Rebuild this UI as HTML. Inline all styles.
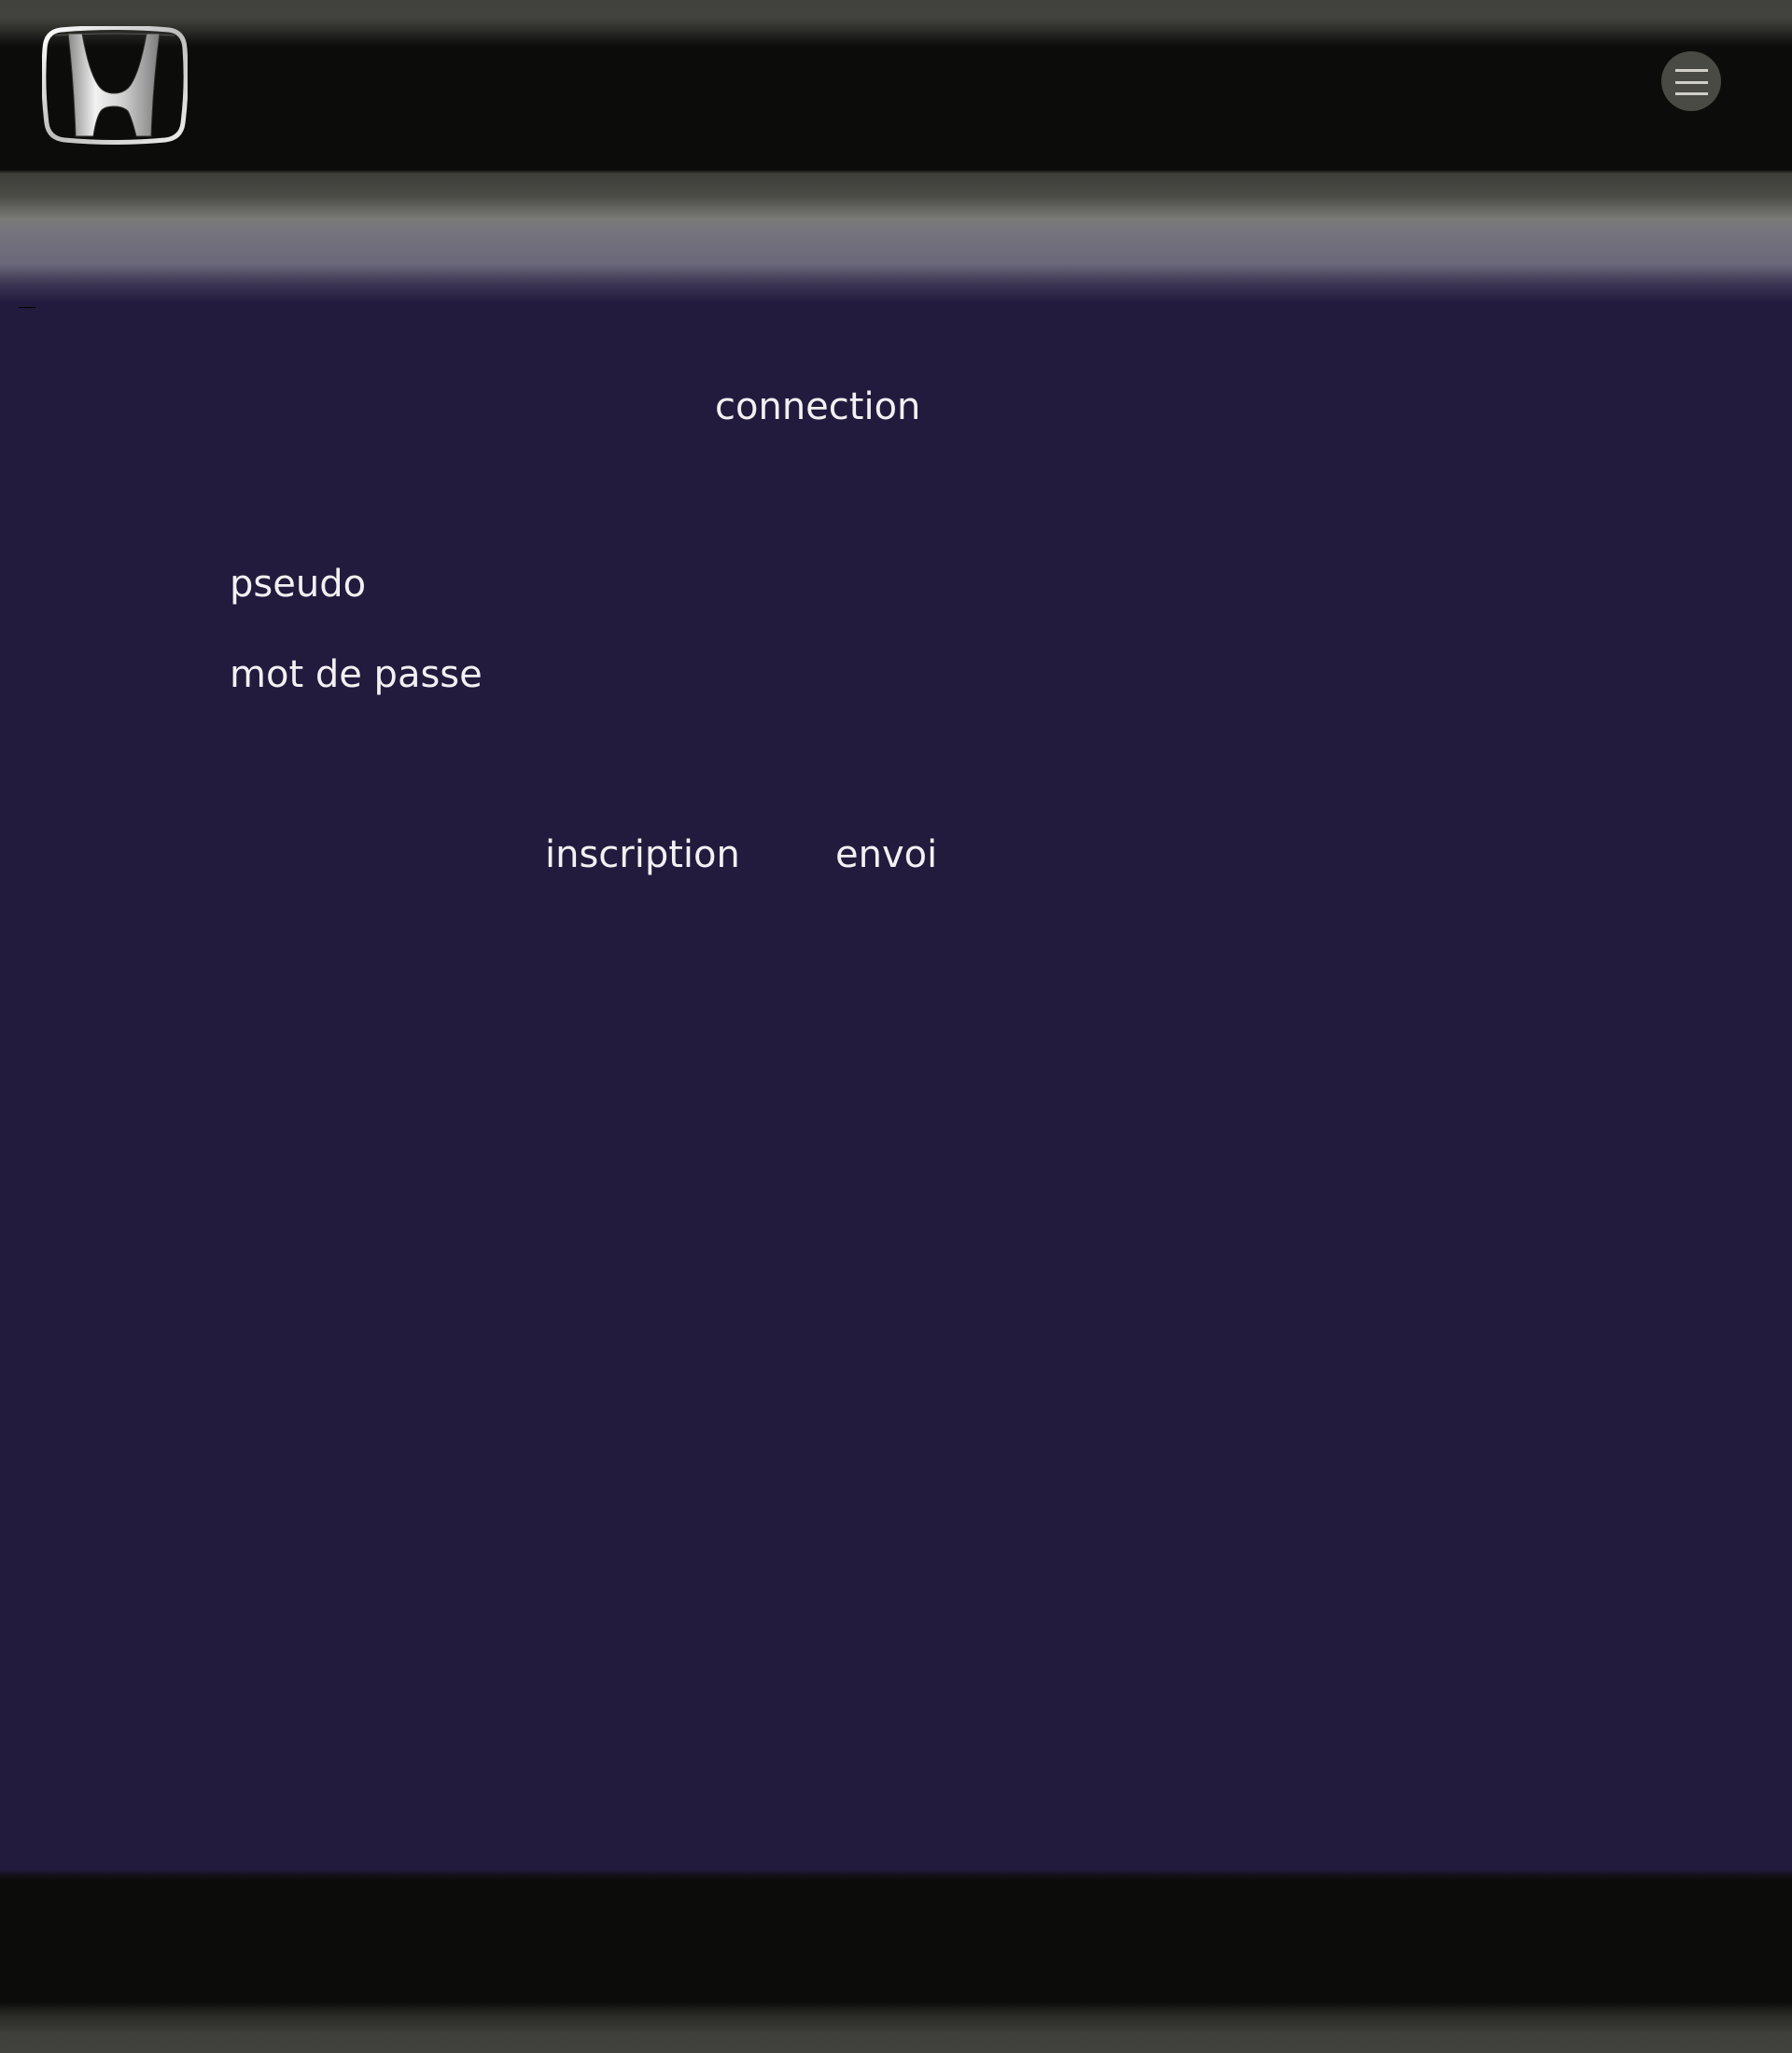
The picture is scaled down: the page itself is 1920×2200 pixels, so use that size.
<!DOCTYPE html>
<html><head><meta charset="utf-8"><style>
html,body{margin:0;padding:0}
body{width:1920px;height:2200px;position:relative;overflow:hidden;
background:linear-gradient(to bottom,#41423d 0px,#42433e 20px,#1a1a18 42px,#0c0c0a 50px,#0c0c0a 182px,#3e3f3a 186px,#4a4b45 210px,#7a7a77 235px,#76747d 248px,#6b697a 282px,#3b3452 305px,#231b3e 325px,#231b3e 2003px,#121018 2010px,#0c0c0a 2015px,#0c0c0a 2145px,#2a2b27 2160px,#3f403b 2180px,#41423d 2200px);
font-family:"DejaVu Sans","Liberation Sans",sans-serif;color:#f4f0f2}
.t{position:absolute;font-size:40px;line-height:1;white-space:nowrap}
</style></head><body>
<svg style="position:absolute;left:45px;top:28px" width="156" height="128" viewBox="0 0 156 128">
<defs>
<linearGradient id="g" x1="0" y1="0" x2="1" y2="1"><stop offset="0" stop-color="#fff"/><stop offset=".5" stop-color="#bdbdbd"/><stop offset="1" stop-color="#eee"/></linearGradient>
<linearGradient id="h" x1="0" y1="0" x2="1" y2="0"><stop offset="0" stop-color="#8a8a8a"/><stop offset=".3" stop-color="#f2f2f2"/><stop offset=".6" stop-color="#cfcfcf"/><stop offset="1" stop-color="#7d7d7d"/></linearGradient>
</defs>
<path d="M20,4 Q78,-1 136,4 Q152,6 153,24 Q156,64 151,104 Q149,120 132,122 Q78,127 24,122 Q7,120 5,104 Q0,64 3,24 Q4,6 20,4 Z" fill="none" stroke="url(#g)" stroke-width="5"/>
<path d="M14,10 Q78,6 142,10" fill="none" stroke="#555" stroke-width="1"/>
<path d="M28,8 L43,8 Q50,48 60,63 Q66,72 77,72 Q89,72 95,63 Q105,48 112,8 L126,8 Q119,60 117,118 L101,118 Q96,98 92,91 Q87,86 77,86 Q67,86 63,91 Q58,98 55,118 L36,118 Q34,60 28,8 Z" fill="url(#h)" stroke="#333" stroke-width="1"/>
</svg>
<div style="position:absolute;left:1780px;top:55px;width:64px;height:64px;border-radius:50%;background:#4a4a45"></div>
<div style="position:absolute;left:1795px;top:74px;width:35px;height:3px;background:#cfcfc8"></div>
<div style="position:absolute;left:1795px;top:87px;width:35px;height:3px;background:#cfcfc8"></div>
<div style="position:absolute;left:1795px;top:99px;width:35px;height:3px;background:#cfcfc8"></div>
<div style="position:absolute;left:20px;top:329px;width:18px;height:1px;background:#000"></div>
<div class="t" style="left:766px;top:416px">connection</div>
<div class="t" style="left:246px;top:606px">pseudo</div>
<div class="t" style="left:246px;top:703px">mot de passe</div>
<div class="t" style="left:584px;top:896px">inscription</div>
<div class="t" style="left:895px;top:896px">envoi</div>
</body></html>
